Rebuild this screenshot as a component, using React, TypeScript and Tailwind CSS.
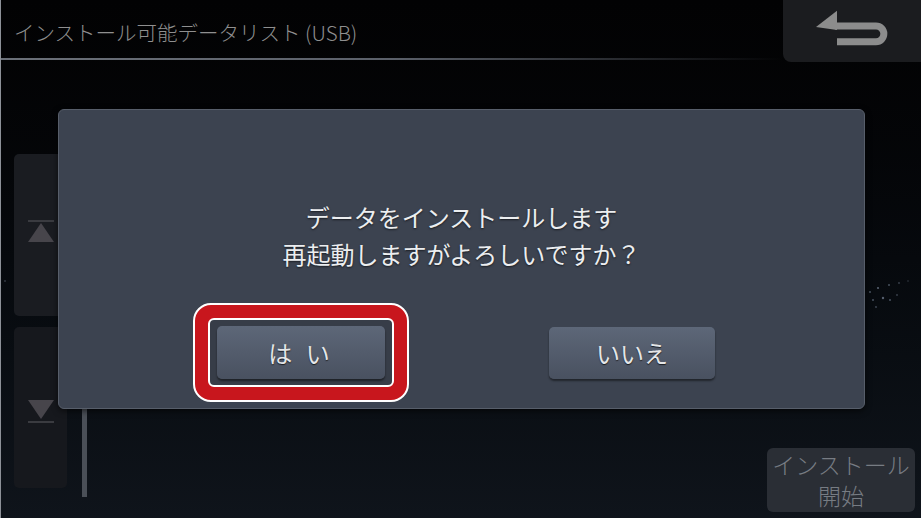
import React from "react";

const font = "font-['Noto_Sans_CJK_JP','Noto_Sans',sans-serif]";

function BackIcon() {
  return (
    <svg width="138" height="62" viewBox="0 0 138 62">
      <polygon points="33,27 54,10.7 54,30" fill="#8c8c8c" />
      <path
        d="M 52 26 H 93 A 7.85 7.85 0 0 1 93 41.7 H 54"
        fill="none"
        stroke="#8c8c8c"
        strokeWidth="7"
      />
    </svg>
  );
}

function Stars() {
  const dots: [number, number, number, number][] = [
    [869, 292, 1, 0.5],
    [877, 288, 1.1, 0.6],
    [888, 285, 1, 0.5],
    [898, 283, 0.9, 0.4],
    [907, 281, 0.8, 0.35],
    [872, 300, 1, 0.5],
    [882, 298, 1.2, 0.6],
    [889, 300, 1, 0.5],
    [896, 295, 0.9, 0.4],
    [875, 307, 0.9, 0.45],
    [4, 281, 0.9, 0.35],
  ];
  return (
    <svg className="absolute left-0 top-0 pointer-events-none" width="921" height="518">
      {dots.map(([x, y, r, o], i) => (
        <circle key={i} cx={x} cy={y} r={r} fill="#8a97ad" opacity={o} />
      ))}
    </svg>
  );
}

export default function App() {
  return (
    <div
      className={`relative w-[921px] h-[518px] overflow-hidden border-l border-[#8d9198] bg-gradient-to-b from-[#020203] via-[#06090d] to-[#0f141b] ${font}`}
    >
      <Stars />
      {/* Header */}
      <div className="relative flex h-[62px]">
        <div className="flex flex-1 flex-col">
          <div className="flex h-[58px] items-center pl-[13px] pt-[6px] text-[20.5px] font-light text-[#8f8f8f]">
            インストール可能データリスト (USB)
          </div>
          <div className="h-[2px] bg-gradient-to-r from-[#6b7079] via-[#5b606a] to-transparent" />
        </div>
        <div className="w-[138px] h-[62px] rounded-bl-[8px] bg-[#1b1c1f]">
          <BackIcon />
        </div>
      </div>

      {/* Body */}
      <div className="relative flex h-[456px]">
        <div className="flex flex-col gap-[11px] pl-[13px] pt-[92px]">
          <div className="flex h-[162px] w-[53px] flex-col items-center rounded-[5px] bg-[#1a1c21] pt-[66px]">
            <svg width="26" height="22" viewBox="0 0 26 22">
              <rect x="0" y="0" width="26" height="2" fill="#3a3b40" />
              <polygon points="13,3 26,22 0,22" fill="#47454b" />
            </svg>
          </div>
          <div className="flex h-[161px] w-[53px] flex-col items-center rounded-[5px] bg-[#16181d] pt-[73px]">
            <svg width="26" height="23" viewBox="0 0 26 23">
              <polygon points="0,0 26,0 13,19" fill="#47454b" />
              <rect x="0" y="21" width="26" height="2" fill="#3a3b40" />
            </svg>
          </div>
        </div>
        <div className="ml-[15px] mt-[88px] h-[347px] w-[5px] bg-[#4a4f57]" />
        <div className="flex flex-1 flex-col">
          <div className="h-[63px] border-b border-[#15181d]" />
        </div>
        <div className="flex flex-col justify-end pb-[6px] pr-[6px]">
          <div className="flex h-[64px] w-[148px] flex-col items-center justify-center rounded-[6px] bg-[#2a2e35] text-[23px] font-light leading-[31px] text-[#777c83]">
            <span>インストール</span>
            <span>開始</span>
          </div>
        </div>
      </div>

      {/* Dialog */}
      <div className="absolute left-[57px] top-[109px] flex h-[300px] w-[807px] flex-col rounded-[6px] border border-[#575e6a] bg-[#3c4350] shadow-[0_2px_6px_rgba(0,0,0,0.6)]">
        <div className="pt-[88px] text-center text-[24px] leading-[37px] text-[#eceef0] [text-shadow:0_1px_2px_rgba(0,0,0,0.6)]">
          <div>データをインストールします</div>
          <div>再起動しますがよろしいですか？</div>
        </div>
        <div className="mt-[31px] flex items-center pl-[134px]">
          <div className="rounded-[18px] border-2 border-white bg-[#c8161d] p-[13px]">
            <div className="rounded-[6px] border-2 border-white bg-[#373d48] px-[7px] py-[6px]">
              <div className="flex h-[53px] w-[168px] items-center justify-center rounded-[5px] bg-gradient-to-b from-[#5d6778] to-[#495160] text-[24px] text-[#e4e6e8] shadow-[0_2px_2px_rgba(0,0,0,0.45)] [text-shadow:0_1px_1px_rgba(0,0,0,0.7)] tracking-[4px]">
                は い
              </div>
            </div>
          </div>
          <div className="ml-[140px] flex h-[52px] w-[166px] items-center justify-center rounded-[5px] bg-gradient-to-b from-[#5d6778] to-[#495160] text-[24px] text-[#e4e6e8] shadow-[0_2px_2px_rgba(0,0,0,0.45)] [text-shadow:0_1px_1px_rgba(0,0,0,0.7)]">
            いいえ
          </div>
        </div>
      </div>
    </div>
  );
}
